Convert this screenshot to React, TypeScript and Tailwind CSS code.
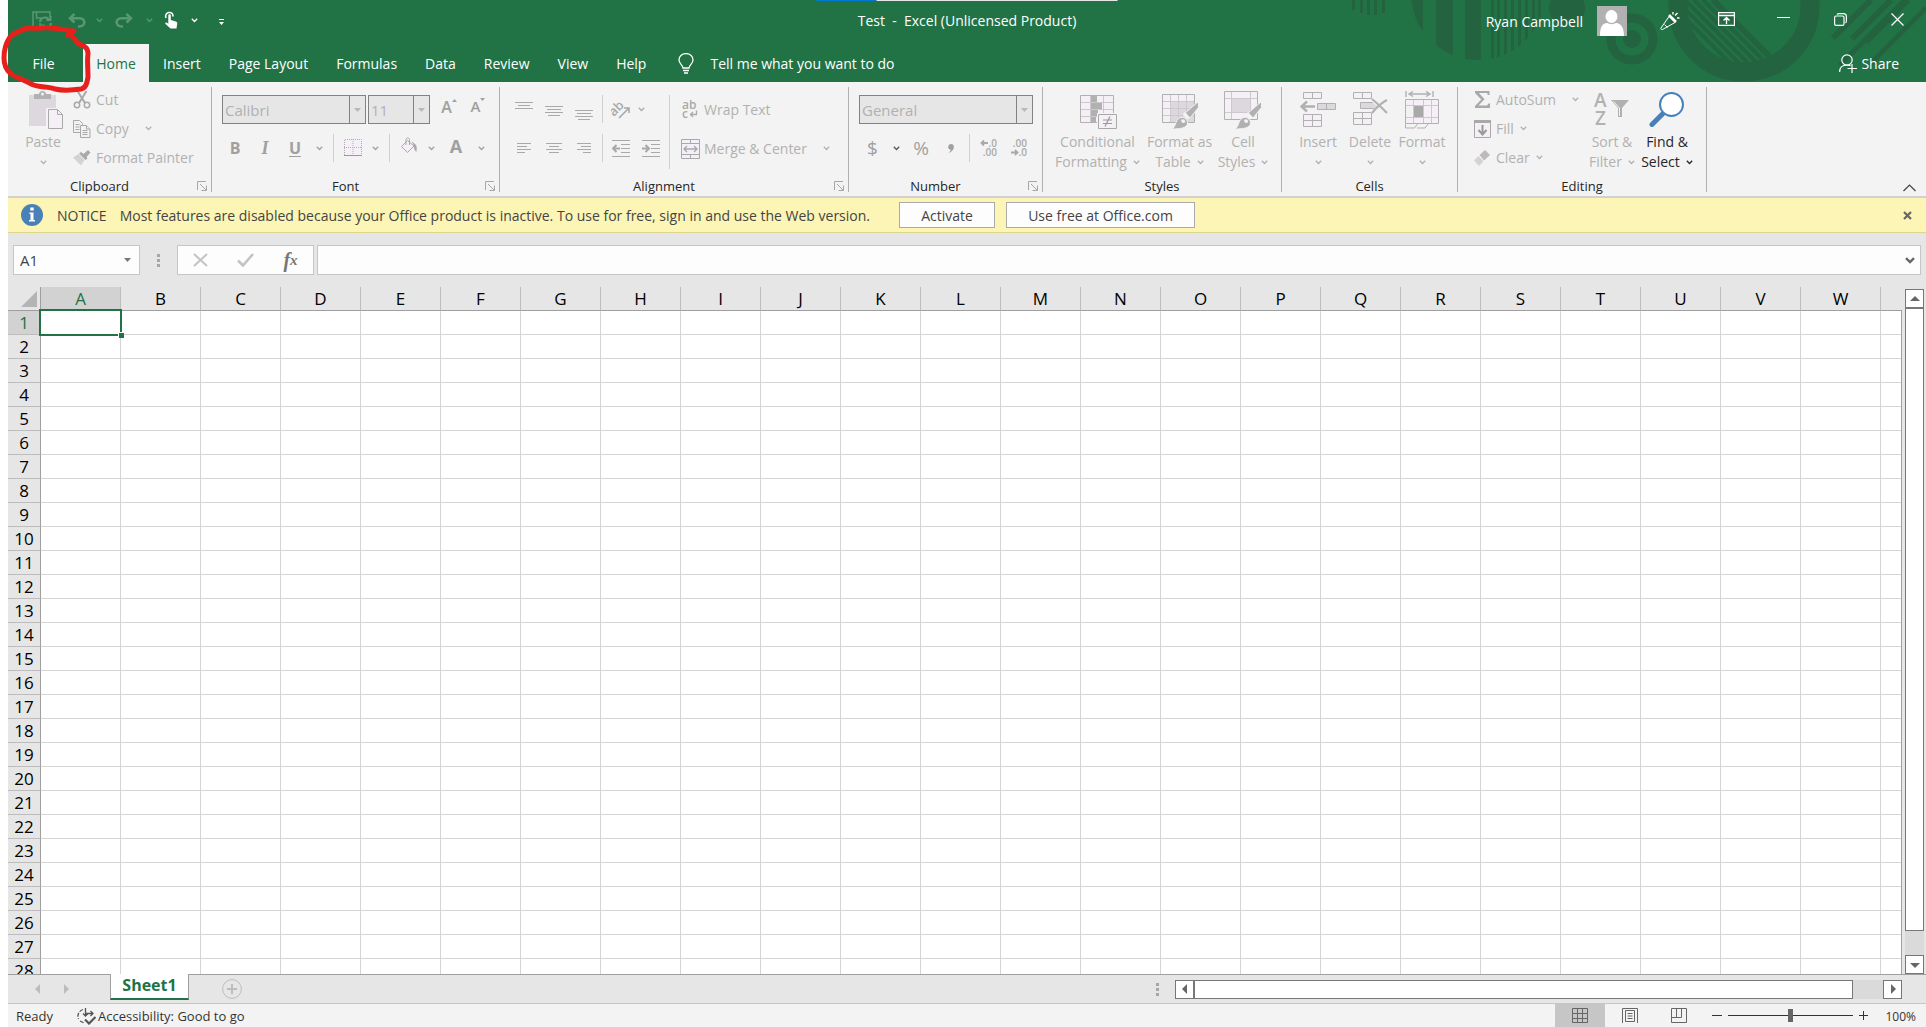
import type { ReactNode } from "react";
import { clsx } from "clsx";

const COLUMNS = "ABCDEFGHIJKLMNOPQRSTUVW".split("");
const ROWS = Array.from({ length: 28 }, (_, i) => i + 1);
const TABS = ["Insert", "Page Layout", "Formulas", "Data", "Review", "View", "Help"];

/* ---------- small shared pieces ---------- */

function Chevron({ className }: { className?: string }) {
  return (
    <svg width="7" height="5" viewBox="0 0 7 5" className={clsx("shrink-0", className)}>
      <path d="M.8 .8 3.5 3.5 6.2 .8" fill="none" stroke="currentColor" strokeWidth="1.3" />
    </svg>
  );
}

function IconButton({ label, className, children }: { label: string; className: string; children: ReactNode }) {
  return (
    <button type="button" aria-label={label} className={clsx("flex h-full shrink-0 items-center justify-center", className)}>
      {children}
    </button>
  );
}

function Separator() {
  return <span className="mx-[5px] h-7 w-px shrink-0 bg-[#d0d0d0]" />;
}

function Group({ title, width, launcher, children }: { title: string; width: string; launcher?: boolean; children: ReactNode }) {
  return (
    <>
      <section aria-label={title} className={clsx("flex shrink-0 flex-col", width)}>
        <div className="flex h-[95px] items-start">{children}</div>
        <div className="flex h-[18px] items-center text-[13px] leading-4 text-[#262626]">
          <span className="flex-1 text-center">{title}</span>
          {launcher && (
            <button type="button" aria-label={`${title} settings`} className="w-5 pl-1.5 text-[#a6a6a6]">
              <svg width="10" height="10" viewBox="0 0 10 10" fill="none" stroke="currentColor">
                <path d="M.5 9V.5H9M3 3l6 6M9.5 4.5v5h-5" />
              </svg>
            </button>
          )}
        </div>
      </section>
      <span className="mt-[5px] h-[105px] w-px shrink-0 bg-[#b1b1b1]" />
    </>
  );
}

function Combo({ label, value, width }: { label: string; value: string; width: string }) {
  return (
    <div className={clsx("flex h-[29px] shrink-0 border border-[#828282] bg-[#e6e6e6] text-[#b1b1b1]", width)}>
      <select disabled aria-label={label} className="min-w-0 flex-1 appearance-none pl-0.5 text-[15px] leading-6">
        <option>{value}</option>
      </select>
      <span className="flex w-4 items-center justify-center border-l border-[#828282]">
        <svg width="7" height="4" viewBox="0 0 7 4">
          <path d="M0 0h7L3.5 4z" fill="#b8b8b8" />
        </svg>
      </span>
    </div>
  );
}

function BigButton({ icon, lines, width, dark }: { icon: ReactNode; lines: [string, string?]; width: string; dark?: boolean }) {
  return (
    <button
      type="button"
      className={clsx("flex shrink-0 flex-col items-center pt-[9px] text-[14px] leading-5", width, dark ? "text-[#262626]" : "text-[#b1b1b1]")}
    >
      <span className="h-[41px]">{icon}</span>
      <span className="whitespace-nowrap">{lines[0]}</span>
      <span className="flex h-5 items-center gap-1.5 whitespace-nowrap">
        {lines[1]}
        <Chevron />
      </span>
    </button>
  );
}

function RowButton({ icon, label, arrow }: { icon: ReactNode; label: string; arrow?: "near" | "far" }) {
  return (
    <button type="button" className="flex h-[29px] items-center gap-1 whitespace-nowrap text-[14px] leading-5 text-[#b1b1b1]">
      <span className="flex w-5 justify-center">{icon}</span>
      {label}
      {arrow && <Chevron className={arrow === "far" ? "ml-3" : "ml-0.5"} />}
    </button>
  );
}

/* ---------- ribbon icons ---------- */

function LinesIcon({ rows }: { rows: [number, number, number][] }) {
  return (
    <svg width="18" height="20" viewBox="0 0 18 20" stroke="#a9a9a9">
      {rows.map(([x1, x2, y]) => (
        <path key={y} d={`M${x1} ${y}.5H${x2}`} />
      ))}
    </svg>
  );
}

function PasteIcon() {
  return (
    <svg width="42" height="39" viewBox="-6 0 42 39">
      <path d="M1 4h27v31H1z" fill="#ddd8dd" />
      <path d="M6 3h5c0-4 7-4 7 0h5v5H6z" fill="#b1b1b1" />
      <circle cx="14.5" cy="3" r="1.5" fill="#f3f3f3" />
      <path d="M18 17h12l6 6v16H18z" fill="#f3f3f3" />
      <path d="M20.5 18.5h9l5 5v14h-14z" fill="#f5f0f8" stroke="#a9a9a9" />
      <path d="M29.5 18.5v5h5" fill="none" stroke="#a9a9a9" />
    </svg>
  );
}

function CutIcon() {
  return (
    <svg width="18" height="18" viewBox="0 0 18 18" fill="none" stroke="#a9a9a9" strokeWidth="1.5">
      <path d="M4.500 0 12 12M13.5 0 6 12" strokeWidth="2" />
      <circle cx="4" cy="14" r="2.7" />
      <circle cx="14" cy="14" r="2.7" />
    </svg>
  );
}

function CopyIcon() {
  return (
    <svg width="18" height="18" viewBox="0 0 18 18" fill="#f5f0f5" stroke="#a9a9a9">
      <path d="M.5 .5h6l3 3v9h-9z" />
      <path d="M2.5 4.5h4M2.5 7h4M2.5 9.5h4" />
      <path d="M7.5 5.5h6l3.5 3.5v8.5h-9.5z" />
      <path d="M13.5 5.5V9H17M9.5 10.5h5M9.5 12.5h5M9.5 14.5h5" />
    </svg>
  );
}

function PainterIcon() {
  return (
    <svg width="18" height="16" viewBox="0 0 18 16">
      <path d="M0 7.5 5.5 4l6 6L8 15.500z" fill="#d6d1d6" />
      <path d="m6 3.5 2-1.5L10.5 4 15 0l2.500 2.500L13.5 7l1 1.500-2 1.500z" fill="#a9a9a9" />
    </svg>
  );
}

function BorderIcon() {
  return (
    <svg width="18" height="18" viewBox="0 0 18 18" fill="#f5f0f8" stroke="#b5a9b5" strokeDasharray="1 1">
      <path d="M.5 16V.5h17V16M9 0v16M0 8.5h18" />
      <path d="M0 16.5h18" stroke="#999" strokeDasharray="none" />
    </svg>
  );
}

function BucketIcon() {
  return (
    <svg width="18" height="18" viewBox="0 0 18 18">
      <path d="M7.5 3.5 14 9l-6.500 6.500L1.500 9.500z" fill="#f5f0f8" stroke="#a9a9a9" />
      <path d="M6 8V2.500c0-2 3.500-2 3.500 0V8" fill="none" stroke="#a9a9a9" />
      <path d="m11.5 4 4 3.500c2 2 1 5 1 7.500-1.500-1-3-3-2.500-6z" fill="#a9a9a9" />
    </svg>
  );
}

function OrientationIcon() {
  return (
    <svg width="20" height="20" viewBox="0 0 20 20">
      <text x="-1" y="12" transform="rotate(-45 7 10)" fontSize="13" fontWeight="600" fill="#a9a9a9">ab</text>
      <path d="M8 18 17.500 8.500M13 8h5v5" fill="none" stroke="#a9a9a9" strokeWidth="1.6" />
    </svg>
  );
}

function IndentIcon({ out }: { out?: boolean }) {
  return (
    <svg width="18" height="17" viewBox="0 0 18 17" fill="none" stroke="#a9a9a9">
      <path d="M0 .5h18M9 4.5h9M9 8.5h9M9 12.5h9M0 16.5h18" />
      <path d={out ? "M8 8.5H1.5M4.5 5 1 8.5 4.5 12" : "M0 8.5h6.5M3.5 5 7 8.5 3.5 12"} strokeWidth="2" />
    </svg>
  );
}

function WrapIcon() {
  return (
    <svg width="16" height="19" viewBox="0 0 16 19">
      <text x="0" y="9" fontSize="12" fontWeight="600" fill="#a9a9a9">ab</text>
      <text x="0" y="18" fontSize="12" fontWeight="600" fill="#a9a9a9">c</text>
      <path d="M14.5 10.5v4H8.5M11 12l-2.500 2.500L11 17" fill="none" stroke="#a9a9a9" strokeWidth="1.3" />
    </svg>
  );
}

function MergeIcon() {
  return (
    <svg width="19" height="20" viewBox="0 0 19 20" fill="#f5f0f8" stroke="#a9a9a9">
      <path d="M.5 .5h18v19H.5zM.5 4.5h18M.5 15.5h18M9.5 .5v4M9.5 15.5v4" />
      <path d="M3 10h13M6 7l-3 3 3 3M13 7l3 3-3 3" fill="none" strokeWidth="1.4" />
    </svg>
  );
}

function DecimalIcon({ increase }: { increase?: boolean }) {
  return (
    <svg width="18" height="18" viewBox="0 0 18 18" fill="#a9a9a9">
      <text x="17" y="8" textAnchor="end" fontSize="10" fontWeight="600">{increase ? ".0" : ".00"}</text>
      <text x="17" y="17" textAnchor="end" fontSize="10" fontWeight="600">{increase ? ".00" : ".0"}</text>
      <path
        d={increase ? "M8 4H1.5M4 1.5 1.5 4 4 6.5" : "M1 13.5h6.5M5 11l2.5 2.5L5 16"}
        fill="none"
        stroke="#a9a9a9"
        strokeWidth="1.8"
      />
    </svg>
  );
}

function ConditionalIcon() {
  return (
    <svg width="38" height="38" viewBox="0 0 38 38">
      <path d="M1.5 4.5h33v27h-33z" fill="#f5f0f5" />
      <path d="M11 4h7v7h5v7h-4v7h-2v7h-6z" fill="#b1b1b1" />
      <path d="M1.5 11.5h33M1.5 18.5h33M1.5 25.5h33M11.5 4v27M24.5 4v27" fill="none" stroke="#ccc8cc" />
      <path d="M1.5 4.5h33v27h-33z" fill="none" stroke="#b1b1b1" />
      <path d="M18 22h20v17H18z" fill="#f3f3f3" />
      <path d="M19.5 23.5h18v14h-18z" fill="#f5f0f5" stroke="#a9a9a9" />
      <path d="M24 29h9M24 32.5h9M31 25.5l-5 10" stroke="#999" strokeWidth="1.2" />
    </svg>
  );
}

function Brush() {
  return (
    <>
      <path d="M37.5 10.5v6L29 27l-5.500-4.500z" fill="#b1b1b1" stroke="#f3f3f3" />
      <path d="m24 21 5 5.500-2.500 2-5-5z" fill="#f3f3f3" />
      <path d="M10.5 38c5-2 3-8 8-11 4-2 8 1 8 5 0 5-7 6-16 6z" fill="#b1b1b1" stroke="#f3f3f3" />
      <path d="M20 29c2-2 5 0 4 2-1 2-4 1-4-2z" fill="#f3f3f3" />
    </>
  );
}

function FormatTableIcon() {
  return (
    <svg width="38" height="38" viewBox="0 0 38 38">
      <path d="M1.5 3.5h32v28h-32z" fill="#f5f0f5" />
      <path d="M9 11h24v20H9z" fill="#ddd8dd" />
      <path d="M1.5 10.5h32M1.5 17.5h32M1.5 24.5h32M9.5 4v27M17.5 4v27M25.5 4v27" stroke="#ccc8cc" />
      <path d="M1.5 3.5h32v28h-32z" fill="none" stroke="#b1b1b1" />
      <Brush />
    </svg>
  );
}

function CellStylesIcon() {
  return (
    <svg width="38" height="38" viewBox="0 0 38 38">
      <path d="M.5 .5h33v28H.5z" fill="#f5f0f5" />
      <path d="M8 8h18v13H8z" fill="#ddd8dd" />
      <path d="M.5 7.5h33M.5 21.5h33M7.5 1v27M26.5 1v27" stroke="#ccc8cc" />
      <path d="M.5 .5h33v28H.5z" fill="none" stroke="#b1b1b1" />
      <Brush />
    </svg>
  );
}

function InsertIcon() {
  return (
    <svg width="36" height="36" viewBox="0 0 36 36" fill="#f5f0f5" stroke="#b1b1b1">
      <path d="M3.5 1.5h18v6h-18zM12.5 1.5v6M3.5 23.5h18v12h-18zM3.5 29.5h18M12.5 23.5v12" />
      <path d="M17.5 12.5h18v6h-18zM26.5 12.5v6" fill="#ddd8dd" />
      <path d="M15 15.5H2M7 10.5l-5.500 5L7 20.5" fill="none" strokeWidth="2.4" />
    </svg>
  );
}

function DeleteIcon() {
  return (
    <svg width="36" height="36" viewBox="0 0 36 36" fill="#f5f0f5" stroke="#b1b1b1">
      <path d="M1.5 1.5h18v6h-18zM10.5 1.5v6M1.5 21.5h18v12h-18zM1.5 27.5h18M10.5 21.5v12" />
      <path d="M8.5 11.5h16v6h-16z" fill="#ddd8dd" />
      <path d="m20 8 15 14M35 9 20 22" fill="none" stroke="#f3f3f3" strokeWidth="4" />
      <path d="M20 8c5 4 10 9 15 14M35 9c-6 3-11 8-15 13" fill="none" strokeWidth="2.2" />
    </svg>
  );
}

function FormatIcon() {
  return (
    <svg width="35" height="38" viewBox="0 0 35 38" fill="#f5f0f5" stroke="#b1b1b1">
      <path d="M1 0v6M28 0v6M4 3h21M8 .5 4 3l4 2.500M21 .5 25 3l-4 2.500" fill="none" strokeWidth="1.4" />
      <path d="M.5 8.5h33v24H.5z" />
      <path d="M1 14.5h32M1 26.5h32M8.5 9v23M18.5 9v23M26.5 9v23" stroke="#ccc8cc" />
      <path d="M9 15h9v11H9z" fill="#a9a9a9" stroke="none" />
      <path d="M.5 33v4h9l3-4M12 37h8l3-4" fill="none" />
    </svg>
  );
}

function SigmaIcon() {
  return (
    <svg width="15" height="17" viewBox="0 0 15 17">
      <path d="M0 0h14.500v4h-1.500l-1-2H4l5.500 6.300L3.500 14.500H12l1.500-2h1.500V17H0v-2l6.300-6.500L0 2z" fill="#a9a9a9" />
    </svg>
  );
}

function FillIcon() {
  return (
    <svg width="17" height="18" viewBox="0 0 17 18">
      <path d="M.5 .5h16v17H.5z" fill="#f5f0f5" stroke="#a9a9a9" />
      <path d="M0 0h17v3H0z" fill="#a9a9a9" />
      <path d="M8.5 5v9M4.5 10l4 4.500 4-4.500" fill="none" stroke="#999" strokeWidth="2" />
    </svg>
  );
}

function EraserIcon() {
  return (
    <svg width="16" height="16" viewBox="0 0 16 16">
      <path d="M5.5 5 11 0l5 5-6 5.500z" fill="#bdb9bd" />
      <path d="m4.5 6 5 5.500L5 16 0 10.500z" fill="#d6d1d6" />
    </svg>
  );
}

function SortIcon() {
  return (
    <svg width="36" height="37" viewBox="0 0 36 37" fill="#b1b1b1">
      <text x="0" y="16" fontSize="19" fontWeight="600">A</text>
      <text x="1" y="34" fontSize="19" fontWeight="600">Z</text>
      <path d="M17 9h18l-7 8v9h-4v-9z" />
      <path d="M19.5 10.5 25.500 17v8" fill="none" stroke="#f5f0f5" />
    </svg>
  );
}

function FindIcon() {
  return (
    <svg width="36" height="36" viewBox="0 0 36 36">
      <path d="M13.5 23 3 33.500" stroke="#4a80b8" strokeWidth="5" strokeLinecap="round" />
      <circle cx="22.5" cy="13.5" r="11.5" fill="#fff" stroke="#4a80b8" strokeWidth="2" />
    </svg>
  );
}

/* ---------- title bar ---------- */

function Decoration() {
  return (
    <svg className="absolute right-0 top-0" width="576" height="82" viewBox="-50 0 576 82">
      <defs>
        <clipPath id="discA"><circle cx="78" cy="-7" r="67" /></clipPath>
        <clipPath id="discB"><circle cx="344" cy="6" r="58" /></clipPath>
      </defs>
      <g fill="#24633f">
        <path d="M-48 0h3v10h-3zM-40 0h3v13h-3zM-33 0h3v15h-3zM-26 0h3v15h-3zM-18 0h3v13h-3z" />
        <g clipPath="url(#discA)">
          <path d="M10 0h13v82H10zM36 0h17v82H36zM65 0h16v82H65z" />
          <path d="M91 0h3v82h-3zM97 0h3v82h-3zM104 0h3v82h-3zM111 0h3v82h-3zM118 0h3v82h-3zM125 0h3v82h-3zM132 0h3v82h-3zM138 0h3v82h-3z" />
        </g>
        <circle cx="167" cy="8" r="18" />
        <circle cx="232" cy="39" r="9" />
      </g>
      <g fill="none" stroke="#24633f">
        <circle cx="232" cy="39" r="21" strokeWidth="9" />
        <circle cx="344" cy="6" r="66" strokeWidth="19" />
        <g clipPath="url(#discB)" strokeWidth="4">
          <path d="m267 0 80 80M276 0l80 80M285 0l80 80M294 0l80 80M303 0l80 80" />
          <path d="m313 0 80 80" strokeWidth="6" />
        </g>
        <path d="m433 38 38-38M452 39l39-39M466 42l42-42" strokeWidth="6" />
        <path d="m440 65 65-65M470 64l56-56" strokeWidth="5" />
      </g>
    </svg>
  );
}

function TitleBar() {
  return (
    <div className="relative grid h-11 grid-cols-[1fr_auto_1fr] text-[14px] text-white">
      <div className="flex pb-1 pl-4">
        <IconButton label="Save" className="w-9 text-[#5a9675]">
          <svg width="20" height="19" viewBox="0 0 20 19" fill="none" stroke="currentColor" strokeWidth="1.5">
            <path d="M6 16H1V1h17v5M4.500 1v6h5M8 16v-4" />
            <path d="M8 11a5 5 0 0 1 9-2.500M18.500 5v4h-4M19 12a5 5 0 0 1-9 3M9 18.500v-4h4" strokeWidth="2" />
          </svg>
        </IconButton>
        <IconButton label="Undo" className="w-[34px] text-[#5a9675]">
          <svg width="18" height="15" viewBox="0 0 18 15" fill="none" stroke="currentColor" strokeWidth="2.5">
            <path d="M6.5 1 2 5.200 6.500 9.500M2 5.200h9.500c6.500 0 6.500 8.300 0 8.300H10" />
          </svg>
        </IconButton>
        <IconButton label="Undo history" className="w-2.5 text-[#5a9675]"><Chevron /></IconButton>
        <IconButton label="Redo" className="w-10 text-[#5a9675]">
          <svg width="18" height="15" viewBox="0 0 18 15" fill="none" stroke="currentColor" strokeWidth="2.5">
            <path d="M11.5 1 16 5.200 11.500 9.500M16 5.200H6.500c-6.500 0-6.500 8.300 0 8.300H8" />
          </svg>
        </IconButton>
        <IconButton label="Redo history" className="w-2.5 text-[#5a9675]"><Chevron /></IconButton>
        <IconButton label="Touch mode" className="w-[34px]">
          <svg width="15" height="18" viewBox="0 0 15 18">
            <path d="M2 7C-.5 1 9.500-1 9 5.500" fill="none" stroke="#fff" strokeWidth="1.6" />
            <path d="M4.3 4.500c0-1.700 2.500-1.700 2.500 0V9l5 1.500c1.700.6 1.700 2 1.200 3.500l-.5 3.500H6.500L1.500 13c-.8-1.200.5-2 1.500-1.300l1.300 1z" fill="#fff" />
          </svg>
        </IconButton>
        <IconButton label="Touch options" className="w-3"><Chevron /></IconButton>
        <IconButton label="Customize toolbar" className="w-[42px]">
          <svg width="5" height="7" viewBox="0 0 5 7" fill="#fff" className="mt-1">
            <path d="M0 0h5v1H0zM0 3h5L2.500 6z" />
          </svg>
        </IconButton>
      </div>
      <h1 className="flex items-center whitespace-pre pb-1">Test  -  Excel (Unlicensed Product)</h1>
      <div className="flex items-center justify-end pb-0.5">
        <span className="whitespace-nowrap">Ryan Campbell</span>
        <svg width="30" height="30" viewBox="0 0 30 30" className="mx-3.5 shrink-0">
          <path d="M0 0h30v30H0z" fill="#b1b1b1" />
          <ellipse cx="14.5" cy="10.5" rx="6" ry="6.5" fill="#fff" />
          <path d="M3 30c0-8 2-13 7-13 3 1.500 6 1.500 9 0 5 0 8 5 8 13z" fill="#fff" />
        </svg>
        <IconButton label="What's new" className="w-[57px]">
          <svg width="20" height="20" viewBox="0 0 20 20" fill="none" stroke="#fff">
            <path d="m9 5.500 6 6-12.500 7c-1 .5-2-.5-1.500-1.500zM4.500 13.500l3 3" />
            <path d="m9 4 7 7" strokeWidth="2.5" />
            <path d="M13 1v2.500M17.500 2 15 4.500M17 7h2.500" strokeWidth="1.4" />
          </svg>
        </IconButton>
        <IconButton label="Ribbon display options" className="w-[57px] pb-1">
          <svg width="17" height="14" viewBox="0 0 17 14" fill="none" stroke="#fff">
            <path d="M.5 .5h16v13H.5zM.5 3.500h16M8.500 12V6M5.500 8.500l3-3 3 3" strokeWidth="1.4" />
          </svg>
        </IconButton>
        <IconButton label="Minimize" className="w-[57px] pb-1.5">
          <svg width="13" height="2" viewBox="0 0 13 2"><path d="M0 .5h13" stroke="#fff" /></svg>
        </IconButton>
        <IconButton label="Restore" className="w-[57px] pb-1">
          <svg width="13" height="13" viewBox="0 0 13 13" fill="none" stroke="#fff" strokeWidth="1.2">
            <rect x=".6" y="3" width="9.4" height="9.4" rx="1.5" />
            <path d="M3 1.500C3.500.6 4 .6 5 .6h4.500c2 0 2.900 1 2.900 2.900V8c0 1 0 1.500-1 2" />
          </svg>
        </IconButton>
        <IconButton label="Close" className="w-[57px] pb-1">
          <svg width="13" height="13" viewBox="0 0 13 13"><path d="m.5 .5 12 12M12.500 .5l-12 12" stroke="#fff" strokeWidth="1.2" /></svg>
        </IconButton>
      </div>
      {/* sliver of the window preview that shows at the top edge */}
      <div className="absolute left-1/2 top-0 flex h-px w-[301px] -translate-x-1/2">
        <span className="w-[60px] bg-[#0078d4]" />
        <span className="flex-1 bg-[#e6e6e6]" />
      </div>
    </div>
  );
}

function TabBar() {
  return (
    <div className="relative flex h-[38px] text-[14px] text-white">
      <button type="button" className="w-[75px] shrink-0 pr-1">File</button>
      <button type="button" className="w-[66px] shrink-0 bg-[#f3f3f3] text-[#217346]">Home</button>
      {TABS.map((tab) => (
        <button key={tab} type="button" className="shrink-0 whitespace-nowrap px-3.5">{tab}</button>
      ))}
      <button type="button" className="ml-[18px] flex shrink-0 items-center gap-4 whitespace-nowrap">
        <svg width="16" height="21" viewBox="0 0 16 21" fill="none" stroke="#fff" strokeWidth="1.3">
          <path d="M5 15c0-3-4-4-4-8 0-8.500 14-8.500 14 0 0 4-4 5-4 8zM5 17.500h6M6 20h4" />
        </svg>
        Tell me what you want to do
      </button>
      <button type="button" className="ml-auto mr-[27px] flex items-center gap-1">
        <svg width="18" height="19" viewBox="0 0 18 19" fill="none" stroke="#fff" strokeWidth="1.2">
          <circle cx="8" cy="6" r="5.2" />
          <path d="M.6 18c0-5 3-7 7.400-7 1.500 0 2.500.3 3.500.8M13 10v9M8.500 14.500H18" />
        </svg>
        Share
      </button>
    </div>
  );
}

/* ---------- ribbon ---------- */

function Ribbon() {
  return (
    <div className="flex h-[115px] shrink-0 border-b border-[#d2d2d2] bg-[#f3f3f3]">
      <Group title="Clipboard" width="w-[203px]" launcher>
        <div className="flex pl-[9px]">
          <BigButton width="w-[52px]" icon={<PasteIcon />} lines={["Paste"]} />
          <div className="pl-[3px] pt-[3px]">
            <RowButton icon={<CutIcon />} label="Cut" />
            <RowButton icon={<CopyIcon />} label="Copy" arrow="far" />
            <RowButton icon={<PainterIcon />} label="Format Painter" />
          </div>
        </div>
      </Group>

      <Group title="Font" width="w-[287px]" launcher>
        <div className="flex flex-col gap-2.5 pt-[13px] text-[#a0a0a0]">
          <div className="flex pl-2.5">
            <Combo label="Font name" value="Calibri" width="w-36" />
            <span className="w-0.5" />
            <Combo label="Font size" value="11" width="w-[62px]" />
            <IconButton label="Increase font size" className="ml-1 w-[30px]">
              <span className="text-[16px] font-semibold">A</span>
              <svg width="5" height="3" viewBox="0 0 5 3" className="mb-3.5"><path d="M0 3h5L2.500 0z" fill="#a0a0a0" /></svg>
            </IconButton>
            <IconButton label="Decrease font size" className="w-[28px]">
              <span className="text-[15px] font-semibold">A</span>
              <svg width="5" height="3" viewBox="0 0 5 3" className="mb-3.5"><path d="M0 0h5L2.500 3z" fill="#a0a0a0" /></svg>
            </IconButton>
          </div>
          <div className="flex h-7 pl-2 text-[16px]">
            <IconButton label="Bold" className="w-[30px] font-bold">B</IconButton>
            <IconButton label="Italic" className="w-[30px] font-['Liberation_Serif',serif] text-[18px] font-bold italic">I</IconButton>
            <IconButton label="Underline" className="w-[30px] font-bold underline underline-offset-2">U</IconButton>
            <IconButton label="Underline styles" className="w-[18px]"><Chevron /></IconButton>
            <Separator />
            <IconButton label="Borders" className="w-[27px]"><BorderIcon /></IconButton>
            <IconButton label="Border styles" className="w-[18px]"><Chevron /></IconButton>
            <Separator />
            <IconButton label="Fill color" className="w-[27px] pb-1"><BucketIcon /></IconButton>
            <IconButton label="Fill colors" className="w-[18px]"><Chevron /></IconButton>
            <IconButton label="Font color" className="w-8 pb-1 text-[18px] font-bold">A</IconButton>
            <IconButton label="Font colors" className="w-[18px]"><Chevron /></IconButton>
          </div>
        </div>
      </Group>

      <Group title="Alignment" width="w-[348px]" launcher>
        <div className="flex flex-col gap-2.5 pl-[9px] pt-[13px] text-[#a9a9a9]">
          <div className="flex h-[29px]">
            <IconButton label="Top align" className="w-[30px]"><LinesIcon rows={[[0, 18, 2], [3, 15, 5], [0, 18, 8]]} /></IconButton>
            <IconButton label="Middle align" className="w-[30px]"><LinesIcon rows={[[0, 18, 6], [2, 16, 9], [0, 18, 12], [3, 15, 15]]} /></IconButton>
            <IconButton label="Bottom align" className="w-[30px]"><LinesIcon rows={[[0, 18, 10], [2, 16, 13], [0, 18, 16], [3, 15, 19]]} /></IconButton>
            <span className="mx-[3px] h-7 w-px bg-[#d0d0d0]" />
            <IconButton label="Orientation" className="w-[30px]"><OrientationIcon /></IconButton>
            <IconButton label="Orientations" className="w-[11px]"><Chevron /></IconButton>
          </div>
          <div className="flex h-7">
            <IconButton label="Align left" className="w-[30px]"><LinesIcon rows={[[2, 16, 5], [2, 12, 8], [2, 16, 11], [2, 10, 14]]} /></IconButton>
            <IconButton label="Center" className="w-[30px]"><LinesIcon rows={[[1, 17, 5], [4, 14, 8], [1, 17, 11], [4, 14, 14]]} /></IconButton>
            <IconButton label="Align right" className="w-[30px]"><LinesIcon rows={[[2, 16, 5], [6, 16, 8], [2, 16, 11], [8, 16, 14]]} /></IconButton>
            <span className="mx-[3px] h-7 w-px bg-[#d0d0d0]" />
            <IconButton label="Decrease indent" className="w-[30px]"><IndentIcon out /></IconButton>
            <IconButton label="Increase indent" className="w-[30px]"><IndentIcon /></IconButton>
          </div>
        </div>
        <span className="mx-[3px] mt-[13px] h-[74px] w-px shrink-0 bg-[#d0d0d0]" />
        <div className="flex flex-col gap-2.5 pl-[7px] pt-[13px]">
          <RowButton icon={<WrapIcon />} label="Wrap Text" />
          <RowButton icon={<MergeIcon />} label="Merge & Center" arrow="far" />
        </div>
      </Group>

      <Group title="Number" width="w-[193px]" launcher>
        <div className="flex flex-col gap-2.5 pl-2.5 pt-[13px] text-[#a0a0a0]">
          <Combo label="Number format" value="General" width="w-[174px]" />
          <div className="flex h-7 text-[19px]">
            <IconButton label="Accounting format" className="w-[27px]">$</IconButton>
            <IconButton label="Currencies" className="w-5 text-[#555]"><Chevron /></IconButton>
            <IconButton label="Percent" className="w-[30px]">%</IconButton>
            <IconButton label="Comma" className="w-[30px]">
              <svg width="6" height="9" viewBox="0 0 6 9"><path d="M3 0c5 0 3 8-2.500 9C3 7 3 5.500 2 5.300-1 5 0 0 3 0z" fill="#a0a0a0" /></svg>
            </IconButton>
            <span className="mx-[3px] h-7 w-px bg-[#d0d0d0]" />
            <IconButton label="Increase decimal" className="w-[32px]"><DecimalIcon increase /></IconButton>
            <IconButton label="Decrease decimal" className="w-[28px]"><DecimalIcon /></IconButton>
          </div>
        </div>
      </Group>

      <Group title="Styles" width="w-[238px]">
        <div className="flex pl-2">
          <BigButton width="w-[93px]" icon={<ConditionalIcon />} lines={["Conditional", "Formatting"]} />
          <BigButton width="w-[71px]" icon={<FormatTableIcon />} lines={["Format as", "Table"]} />
          <BigButton width="w-[56px]" icon={<CellStylesIcon />} lines={["Cell", "Styles"]} />
        </div>
      </Group>

      <Group title="Cells" width="w-[175px]">
        <div className="flex pl-2.5">
          <BigButton width="w-[52px]" icon={<InsertIcon />} lines={["Insert"]} />
          <BigButton width="w-[52px]" icon={<DeleteIcon />} lines={["Delete"]} />
          <BigButton width="w-[52px]" icon={<FormatIcon />} lines={["Format"]} />
        </div>
      </Group>

      <Group title="Editing" width="w-[248px]">
        <div className="w-32 shrink-0 pl-3.5 pt-[3px]">
          <RowButton icon={<SigmaIcon />} label="AutoSum" arrow="far" />
          <RowButton icon={<FillIcon />} label="Fill" arrow="near" />
          <RowButton icon={<EraserIcon />} label="Clear" arrow="near" />
        </div>
        <BigButton width="w-[52px]" icon={<SortIcon />} lines={["Sort &", "Filter"]} />
        <BigButton width="w-[58px]" icon={<FindIcon />} lines={["Find &", "Select"]} dark />
      </Group>

      <button type="button" aria-label="Collapse ribbon" className="ml-auto mr-2.5 self-end pb-1">
        <svg width="13" height="8" viewBox="0 0 13 8"><path d="m.5 7 6-6 6 6" fill="none" stroke="#444" strokeWidth="1.2" /></svg>
      </button>
    </div>
  );
}

function Notice() {
  return (
    <div className="flex h-9 shrink-0 items-center border-y border-[#dcd78c] bg-[#fcf5b5] pl-[13px] text-[14px] text-[#444]">
      <svg width="22" height="22" viewBox="0 0 22 22" className="shrink-0">
        <circle cx="11" cy="11" r="11" fill="#4a80b8" />
        <path d="M9.3 3.500h3.400v3H9.300zM8.500 8.500h4V16h1.500v1.500h-6V16h1.500v-6h-1z" fill="#fff" />
      </svg>
      <span className="ml-3.5 font-medium">NOTICE</span>
      <p className="ml-[13px] whitespace-nowrap">
        Most features are disabled because your Office product is inactive. To use for free, sign in and use the Web version.
      </p>
      <button type="button" className="ml-[29px] h-[26px] w-24 border border-[#ababab] bg-[#fdfdfd]">Activate</button>
      <button type="button" className="ml-[11px] h-[26px] w-[189px] border border-[#ababab] bg-[#fdfdfd]">Use free at Office.com</button>
      <button type="button" aria-label="Close notice" className="ml-auto mr-[14px]">
        <svg width="9" height="9" viewBox="0 0 9 9"><path d="m1 1 7 7M8 1 1 8" stroke="#666" strokeWidth="2.2" /></svg>
      </button>
    </div>
  );
}

function Dots() {
  return (
    <svg width="3" height="13" viewBox="0 0 3 13" fill="#a6a6a6" className="shrink-0">
      <path d="M0 0h3v3H0zM0 5h3v3H0zM0 10h3v3H0z" />
    </svg>
  );
}

function FormulaBar() {
  return (
    <div className="flex h-[54px] shrink-0 items-center px-[5px]">
      <div className="flex h-[30px] w-[127px] shrink-0 items-center border border-[#c6c6c6] bg-[#fdfdfd]">
        <input aria-label="Name box" defaultValue="A1" className="w-[110px] pl-1.5 text-[15px] text-[#444] outline-none" />
        <svg width="7" height="4" viewBox="0 0 7 4"><path d="M0 0h7L3.500 4z" fill="#777" /></svg>
      </div>
      <span className="flex w-[37px] justify-center"><Dots /></span>
      <div className="flex h-[30px] w-[137px] shrink-0 items-center border border-[#c6c6c6] bg-[#fdfdfd]">
        <IconButton label="Cancel" className="w-[45px]">
          <svg width="15" height="14" viewBox="0 0 15 14"><path d="m1 1 13 12M14 1 1 13" stroke="#c3c3c3" strokeWidth="2" /></svg>
        </IconButton>
        <IconButton label="Enter" className="w-[45px]">
          <svg width="17" height="14" viewBox="0 0 17 14"><path d="m1 7.500 5 5L16 1" fill="none" stroke="#c3c3c3" strokeWidth="2.6" /></svg>
        </IconButton>
        <IconButton label="Insert function" className="w-[45px] font-['Liberation_Serif',serif] text-[20px] font-bold italic leading-none text-[#777]">
          f<span className="text-[15px]">x</span>
        </IconButton>
      </div>
      <div className="ml-[3px] flex h-[30px] flex-1 items-center border border-[#c6c6c6] bg-[#fdfdfd]">
        <input aria-label="Formula" className="h-full min-w-0 flex-1 px-2 text-[15px] outline-none" />
        <button type="button" aria-label="Expand formula bar" className="mr-[5px]">
          <svg width="10" height="7" viewBox="0 0 10 7"><path d="m1 1.200 4 3.800 4-3.800" fill="none" stroke="#666" strokeWidth="2.4" /></svg>
        </button>
      </div>
    </div>
  );
}

/* ---------- sheet ---------- */

function ScrollArrow({ direction, d }: { direction: string; d: string }) {
  return (
    <button type="button" aria-label={`Scroll ${direction}`} className="flex size-[19px] shrink-0 items-center justify-center border border-[#777] bg-white">
      <svg width="10" height="10" viewBox="0 0 10 10"><path d={d} fill="#666" /></svg>
    </button>
  );
}

function Sheet() {
  return (
    <div className="flex min-h-0 flex-1">
      <div className="relative min-w-0 flex-1 overflow-hidden">
        <table className="w-max table-fixed border-separate border-spacing-0 bg-white text-[17px] leading-[22px] text-black">
          <colgroup>
            <col className="w-[33px]" />
            {COLUMNS.map((c) => <col key={c} className="w-20" />)}
            <col className="w-20" />
          </colgroup>
          <thead>
            <tr className="h-6">
              <th aria-label="Select all" className="w-[33px] border-b border-r border-[#9f9f9f] bg-[#e6e6e6] p-0">
                <svg width="16" height="16" viewBox="0 0 16 16" className="ml-[13px]"><path d="M16 0v16H0z" fill="#b4b4b4" /></svg>
              </th>
              {COLUMNS.map((c) => (
                <th
                  key={c}
                  scope="col"
                  className={clsx(
                    "w-20 border-b border-r border-b-[#9f9f9f] border-r-[#bdbdbd] p-0 font-normal",
                    c === "A" ? "bg-[#d2d2d2] text-[#217346]" : "bg-[#e6e6e6]"
                  )}
                >
                  {c}
                </th>
              ))}
              <td className="w-20 border-b border-[#9f9f9f] bg-[#e6e6e6] p-0" />
            </tr>
          </thead>
          <tbody>
            {ROWS.map((row) => (
              <tr key={row} className="h-6">
                <th
                  scope="row"
                  className={clsx(
                    "border-b border-r border-b-[#bdbdbd] border-r-[#9f9f9f] p-0 font-normal",
                    row === 1 ? "bg-[#d2d2d2] text-[#217346]" : "bg-[#e6e6e6]"
                  )}
                >
                  {row}
                </th>
                {COLUMNS.map((c) => (
                  <td key={c} className="relative border-b border-r border-[#d4d4d4] p-0">
                    {row === 1 && c === "A" && (
                      <div className="absolute -bottom-0.5 -left-0.5 -right-0.5 -top-0.5 z-10 border-2 border-[#217346]">
                        <span className="absolute -bottom-1 -right-1 box-content size-[5px] border-l border-t border-white bg-[#217346]" />
                      </div>
                    )}
                  </td>
                ))}
                <td className="border-b border-[#d4d4d4] p-0" />
              </tr>
            ))}
          </tbody>
        </table>
        <span className="absolute bottom-0 right-0 top-6 w-px bg-[#9f9f9f]" />
      </div>
      <div className="flex w-6 shrink-0 flex-col pl-[3px] pr-0.5 pt-0.5">
        <ScrollArrow direction="up" d="M0 7h10L5 2z" />
        <div className="flex flex-1 flex-col bg-[#dadada]">
          <div className="flex-1 border border-[#777] bg-white" />
          <div className="h-6" />
        </div>
        <ScrollArrow direction="down" d="M0 3h10L5 8z" />
      </div>
    </div>
  );
}

function SheetTabs() {
  return (
    <div className="flex h-[30px] shrink-0 border-y border-b-[#c6c6c6] border-t-[#9f9f9f]">
      <div className="flex w-[102px] shrink-0 items-center gap-6 pl-[27px]">
        <svg width="5" height="10" viewBox="0 0 5 10"><path d="M5 0v10L0 5z" fill="#bdbdbd" /></svg>
        <svg width="5" height="10" viewBox="0 0 5 10"><path d="M0 0v10l5-5z" fill="#bdbdbd" /></svg>
      </div>
      <button type="button" className="relative -mt-px h-[26px] w-[79px] shrink-0 border-x border-b-2 border-x-[#9f9f9f] border-b-[#217346] bg-white pb-0.5 text-[16px] font-bold leading-5 text-[#217346]">
        Sheet1
      </button>
      <button type="button" aria-label="New sheet" className="ml-[33px]">
        <svg width="20" height="20" viewBox="0 0 20 20" fill="none" stroke="#bdbdbd">
          <circle cx="10" cy="10" r="9.4" />
          <path d="M10 5v10M5 10h10" strokeWidth="2" />
        </svg>
      </button>
      <div className="ml-auto flex w-[770px] items-center gap-4">
        <Dots />
        <div className="mr-6 flex h-[19px] flex-1 bg-[#dadada]">
          <ScrollArrow direction="left" d="M7 0v10L2 5z" />
          <div className="flex-1 border border-[#777] bg-white" />
          <div className="w-[30px]" />
          <ScrollArrow direction="right" d="M3 0v10l5-5z" />
        </div>
      </div>
    </div>
  );
}

function StatusBar() {
  return (
    <div className="flex h-[23px] shrink-0 items-center bg-[#f3f3f3] pl-2 text-[13px] text-[#333]">
      <span className="w-[61px] pt-0.5">Ready</span>
      <button type="button" className="flex items-center gap-0.5 pt-0.5">
        <svg width="19" height="17" viewBox="0 0 19 17" fill="none" stroke="#555">
          <path d="M6 1.500A7 7 0 0 0 1.500 11M3 13l4 2" strokeDasharray="4 1.5" strokeWidth="1.3" />
          <path d="M8.5 0v8M6 5.500 8.500 8 11 5.500M9 5.500h7M13.500 3 16 5.500 13.500 8" strokeWidth="1.3" />
          <path d="m8 11.500 4 4 6.500-6.500" strokeWidth="2.2" />
        </svg>
        Accessibility: Good to go
      </button>
      <div className="ml-auto flex h-full items-center">
        <IconButton label="Normal view" className="w-[50px] bg-[#c6c6c6]">
          <svg width="16" height="15" viewBox="0 0 16 15" fill="none" stroke="#666"><path d="M.5 .5h15v14H.5zM5.500 0v15M10.500 0v15M0 5.500h16M0 10.500h16" /></svg>
        </IconButton>
        <IconButton label="Page layout view" className="w-[49px]">
          <svg width="16" height="15" viewBox="0 0 16 15" fill="none" stroke="#666"><path d="M.5 15V.5h15V15M3.500 2.500h9v11h-9zM5.500 5.500h5M5.500 8h5M5.500 10.500h5" /></svg>
        </IconButton>
        <IconButton label="Page break view" className="w-[50px]">
          <svg width="16" height="15" viewBox="0 0 16 15" fill="none" stroke="#666"><path d="M.5 .5h15v14H.5zM5.500 0v9.500M0 9.500h10.500V0" /></svg>
        </IconButton>
        <button type="button" aria-label="Zoom out" className="ml-2 mr-1.5">
          <svg width="10" height="10" viewBox="0 0 10 10"><path d="M0 4.500h10" stroke="#333" /></svg>
        </button>
        <input
          type="range"
          aria-label="Zoom"
          defaultValue={50}
          className="h-[13px] w-[125px] appearance-none bg-[linear-gradient(#333,#333)] bg-[length:100%_1px] bg-center bg-no-repeat [&::-webkit-slider-thumb]:h-[13px] [&::-webkit-slider-thumb]:w-[5px] [&::-webkit-slider-thumb]:appearance-none [&::-webkit-slider-thumb]:bg-[#666]"
        />
        <button type="button" aria-label="Zoom in" className="ml-1.5">
          <svg width="9" height="9" viewBox="0 0 9 9"><path d="M0 4.500h9M4.500 0v9" stroke="#333" /></svg>
        </button>
        <span className="ml-4 mr-2.5 w-8 pt-0.5 text-right text-[12px]">100%</span>
      </div>
    </div>
  );
}

export default function App() {
  return (
    <div className="relative flex h-screen flex-col overflow-hidden bg-[#e6e6e6] pl-2 font-['Open_Sans',sans-serif] before:absolute before:inset-y-0 before:left-0 before:w-2 before:bg-white">
      <header className="relative shrink-0 bg-[#217346]">
        <Decoration />
        <TitleBar />
        <TabBar />
      </header>
      <Ribbon />
      <Notice />
      <FormulaBar />
      <Sheet />
      <SheetTabs />
      <StatusBar />

      {/* red marker loop round the File tab */}
      <svg width="96" height="96" viewBox="0 0 96 96" className="pointer-events-none absolute left-0 top-0">
        <path
          d="M74 31C64 30 53 27 43 28S28 27 24 29C20 32 14 32 10 37C6 43 4 50 4 58C4 65 6 70 11 74C17 78 25 80 31 84C40 88 48 86 55 89C64 91 74 90 81 89C86 88 87 83 88 77C88 69 87 61 88 54C88 47 84 46 79 44C75 42 75 35 68 35"
          fill="none"
          stroke="#e8201c"
          strokeWidth="5"
          strokeLinecap="round"
          strokeLinejoin="round"
        />
      </svg>
    </div>
  );
}
